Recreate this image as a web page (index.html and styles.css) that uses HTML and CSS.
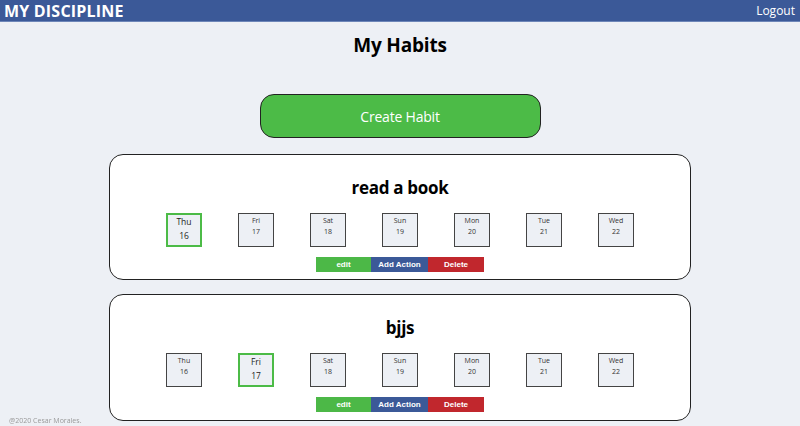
FILE: index.html
```html
<!DOCTYPE html>
<html>
<head>
<meta charset="utf-8">
<link rel="stylesheet" href="styles.css">
</head>
<body>
<header class="topbar">
  <span class="brand">MY DISCIPLINE</span>
  <span class="logout">Logout</span>
</header>
<main class="page">
  <h1 class="title">My Habits</h1>
  <button class="create">Create Habit</button>
  <section class="card">
    <h2 class="habit-name">read a book</h2>
    <div class="days">
      <div class="day selected"><span>Thu</span><span>16</span></div>
      <div class="day"><span>Fri</span><span>17</span></div>
      <div class="day"><span>Sat</span><span>18</span></div>
      <div class="day"><span>Sun</span><span>19</span></div>
      <div class="day"><span>Mon</span><span>20</span></div>
      <div class="day"><span>Tue</span><span>21</span></div>
      <div class="day"><span>Wed</span><span>22</span></div>
    </div>
    <div class="actions">
      <button class="btn edit">edit</button><button class="btn add">Add Action</button><button class="btn del">Delete</button>
    </div>
  </section>
  <section class="card">
    <h2 class="habit-name">bjjs</h2>
    <div class="days">
      <div class="day"><span>Thu</span><span>16</span></div>
      <div class="day selected"><span>Fri</span><span>17</span></div>
      <div class="day"><span>Sat</span><span>18</span></div>
      <div class="day"><span>Sun</span><span>19</span></div>
      <div class="day"><span>Mon</span><span>20</span></div>
      <div class="day"><span>Tue</span><span>21</span></div>
      <div class="day"><span>Wed</span><span>22</span></div>
    </div>
    <div class="actions">
      <button class="btn edit">edit</button><button class="btn add">Add Action</button><button class="btn del">Delete</button>
    </div>
  </section>
</main>
<footer class="footer">@2020 Cesar Morales.</footer>
</body>
</html>
```
FILE: styles.css
```css
html, body {
  margin: 0;
  padding: 0;
}
body {
  background: #edf0f5;
  font-family: "Open Sans", "Liberation Sans", sans-serif;
  color: #000;
  height: 426px;
  overflow: hidden;
}
.topbar {
  height: 22px;
  background: #3b5998;
  border-bottom: 1px solid #6d86b8;
  box-sizing: border-box;
  display: flex;
  justify-content: space-between;
  align-items: center;
  padding: 0 5px 0 4px;
  color: #fff;
}
.brand {
  font-weight: 700;
  font-size: 16px;
  letter-spacing: 0.2px;
}
.logout {
  font-size: 12px;
}
.page {
  display: flex;
  flex-direction: column;
  align-items: center;
}
.title {
  font-size: 19px;
  font-weight: 700;
  line-height: 28px;
  letter-spacing: -0.2px;
  margin: 9px 0 35px;
}
.create {
  width: 281px;
  height: 44px;
  background: #4cbb47;
  border: 1px solid #222;
  border-radius: 14px;
  color: #fff;
  font-family: "Open Sans", "Liberation Sans", sans-serif;
  font-size: 14px;
  letter-spacing: -0.2px;
  margin-bottom: 16px;
}
.card {
  width: 582px;
  box-sizing: border-box;
  background: #fff;
  border: 1px solid #222;
  border-radius: 14px;
  padding: 21px 0 7px;
  margin-bottom: 14px;
  display: flex;
  flex-direction: column;
  align-items: center;
}
.card + .card {
  padding-bottom: 8px;
}
.habit-name {
  font-size: 17px;
  font-weight: 700;
  line-height: 24px;
  letter-spacing: -0.3px;
  margin: 0 0 13px;
}
.days {
  display: flex;
  gap: 36px;
}
.day {
  width: 36px;
  height: 34px;
  box-sizing: border-box;
  border: 1px solid #444;
  background: #edf0f5;
  display: flex;
  flex-direction: column;
  align-items: center;
  font-family: "Open Sans", "Liberation Sans", sans-serif;
  font-size: 7px;
  line-height: 11px;
  padding-top: 1px;
  color: #333;
}
.day.selected {
  border: 2px solid #4cbb47;
  font-size: 8.5px;
  line-height: 14px;
  padding-top: 0;
  color: #222;
}
.actions {
  display: flex;
  margin-top: 10px;
}
.btn {
  height: 15px;
  border: none;
  padding: 0;
  color: #fff;
  font-family: "Liberation Sans", sans-serif;
  font-weight: 700;
  font-size: 8px;
}
.edit { width: 55px; background: #4cb847; }
.add { width: 57px; background: #3b5998; }
.del { width: 56px; background: #c1272d; }
.footer {
  position: fixed;
  left: 9px;
  bottom: 1px;
  font-size: 7px;
  color: #999;
}
```
